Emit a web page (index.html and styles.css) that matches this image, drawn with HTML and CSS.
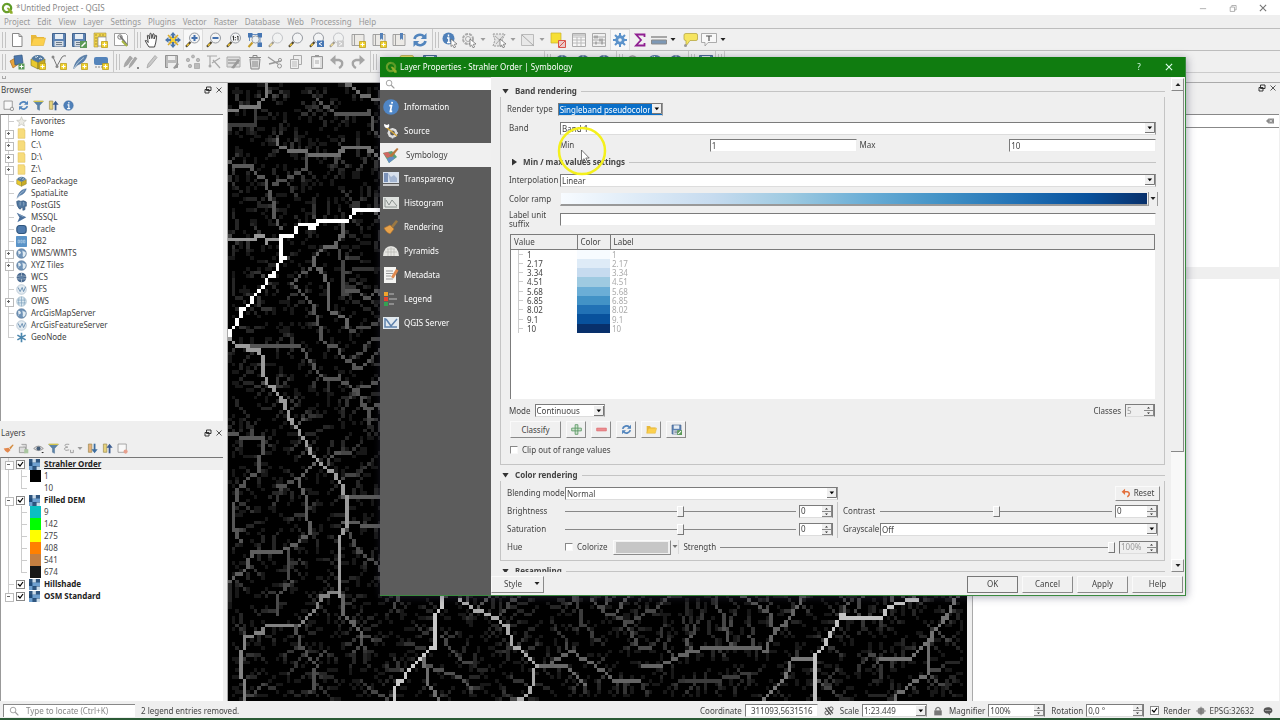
FILE: index.html
```html
<!DOCTYPE html>
<html lang="en">
<head>
<meta charset="utf-8">
<title>*Untitled Project - QGIS</title>
<link rel="stylesheet" href="styles.css">
</head>
<body>
<svg class="defs" aria-hidden="true">
  <symbol id="qgis" viewBox="0 0 16 16"><path d="M8 2.4a5.6 5.6 0 1 0 3.6 9.9" fill="none" stroke="#6a9f2c" stroke-width="3"/><path d="M8 2.4a5.6 5.6 0 0 1 4.6 8.6" fill="none" stroke="#5a9a26" stroke-width="3"/><path d="M7.5 7.5h3l5 5.5v2.500h-3z" fill="#8fae2c"/></symbol>
  <symbol id="page" viewBox="0 0 16 16"><path d="M3.500 1.500h6.500l3 3v10h-9.500z" fill="#fff" stroke="#888"/><path d="M10 1.500v3h3" fill="none" stroke="#888"/></symbol>
  <symbol id="folder" viewBox="0 0 16 16"><path d="M1 13V3h5l1 2h7v2" fill="#e8b93c"/><path d="M1 13.500 3.500 6h12L13.500 13.500z" fill="#fcd04e" stroke="#e0b030" stroke-width=".6"/></symbol>
  <symbol id="save" viewBox="0 0 16 16"><path d="M1.500 1.500h13v13h-13z" fill="#5d83b4" stroke="#44658f"/><path d="M4 2h8v5H4z" fill="#e6edf4"/><path d="M3.500 9h9v5.500h-9z" fill="#d7dde4"/><path d="M5 10.500h6M5 12.500h6" stroke="#6d7b8c"/></symbol>
  <symbol id="saveas" viewBox="0 0 16 16"><use href="#save"/><path d="M9 9h7v7H9z" fill="#5b9a58"/><path d="m10.500 14.500 4-4" stroke="#fff" stroke-width="1.500"/></symbol>
  <symbol id="plus" viewBox="0 0 16 16"><path d="M9.500 9.500h6v6h-6z" fill="#efd12c" stroke="#b79710" stroke-width=".7"/><path d="M12.500 10.500v4M10.500 12.500h4" stroke="#fff"/></symbol>
  <symbol id="layout" viewBox="0 0 16 16"><path d="M2 1h12v4H6v10H2z" fill="#f1d54b" stroke="#a8903b" stroke-width=".6"/><path d="M6 5h8v9H6z" fill="#fff" stroke="#888" stroke-width=".7"/><path d="M3 3h2M3 6h2M3 9h2M3 12h2M8 2v2M11 2v2" stroke="#8c762b" stroke-width=".7"/><use href="#plus"/></symbol>
  <symbol id="stylemgr" viewBox="0 0 16 16"><path d="M1.500 1.500h11l2 2v10h-13z" fill="#fff" stroke="#888" stroke-width=".8"/><path d="M7 4 14 13" stroke="#777" stroke-width="2"/><circle cx="7" cy="5" r="2.200" fill="none" stroke="#777"/><path d="m9 9 5 5" stroke="#a9b743" stroke-width="2"/></symbol>
  <symbol id="hand" viewBox="0 0 16 16"><path d="M5 15c-1-2-3-4-3.800-6.300 1-.7 2 .3 3 1.800L3.300 3.500c1-.9 1.600 0 2.300 3.500L6 1.500c1-.8 1.600 0 1.800 5l1.200-4.700c1.300-.4 1.400.4 1 5.200l1.600-3.600c1.200-.2 1.200.6.700 3.600-.3 3-.8 5-1.800 8z" fill="#fff" stroke="#333" stroke-width=".9"/></symbol>
  <symbol id="pan" viewBox="0 0 16 16"><path d="M5 5h6v6H5z" fill="#f2cf3c" stroke="#9b8a33" stroke-width=".6"/><path d="m8 0 3 3.500H9V6H7V3.500H5zM8 16l-3-3.500h2V10h2v2.500h2zM0 8l3.500-3v2H6v2H3.500v2zM16 8l-3.500-3v2H10v2h2.500v2z" fill="#4a75ab"/><path d="m3 3 3 3M13 3l-3 3M3 13l3-3M13 13l-3-3" stroke="#d9ab24" stroke-width="1.500"/></symbol>
  <symbol id="glass" viewBox="0 0 16 16"><path d="m5.500 10-4.500 4.800" stroke="#4c4330" stroke-width="2.200"/><path d="m4 11.700-2 2" stroke="#efc531" stroke-width="1.600"/><circle cx="9.500" cy="6" r="5" fill="#f3f4f5" stroke="#8b9096" stroke-width=".9"/></symbol>
  <symbol id="zoomin" viewBox="0 0 16 16"><use href="#glass"/><path d="M9.500 3v6M6.500 6h6" stroke="#4270ae" stroke-width="2"/></symbol>
  <symbol id="zoomout" viewBox="0 0 16 16"><use href="#glass"/><path d="M6.500 6h6" stroke="#4270ae" stroke-width="2"/></symbol>
  <symbol id="zoom11" viewBox="0 0 16 16"><use href="#glass"/><path d="M6.500 4.800 7.500 4v4.500M11 4.800l1-.8v4.500M9.300 5v1M9.300 7.300v1" fill="none" stroke="#333"/></symbol>
  <symbol id="zoomfull" viewBox="0 0 16 16"><path d="M1 1h4.500v4.500H1zM10.500 1H15v4.500h-4.500zM10.500 10.500H15V15h-4.500z" fill="#4676b3"/><path d="M5 2.500h6M13 5v6M2.500 5v4" stroke="#4676b3" stroke-width=".8"/><circle cx="8.500" cy="7.500" r="3.600" fill="#eef1f3" stroke="#8b9096" stroke-width=".8"/><path d="m5.500 10.500-4 4.500" stroke="#c39a25" stroke-width="2"/></symbol>
  <symbol id="zoomlast" viewBox="0 0 16 16"><use href="#glass"/><path d="M8 8.500h7V15H8z" fill="#4676b3"/><path d="m13 10-3 1.800 3 1.800" fill="none" stroke="#fff"/></symbol>
  <symbol id="zoomnext" viewBox="0 0 16 16"><use href="#glass"/><path d="M8 8.500h7V15H8z" fill="#aaa"/><path d="m10 10 3 1.800-3 1.800" fill="none" stroke="#fff"/></symbol>
  <symbol id="book" viewBox="0 0 16 16"><path d="M2 2.500h12v11H2z" fill="#eceae6" stroke="#8f8f8f" stroke-width=".8"/><path d="M4.500 2.500v11" stroke="#8f8f8f" stroke-width=".8"/></symbol>
  <symbol id="mapview" viewBox="0 0 16 16"><use href="#book"/><use href="#plus"/></symbol>
  <symbol id="bookmark" viewBox="0 0 16 16"><use href="#book"/><path d="M9 1h3v7l-1.500-1.500L9 8z" fill="#5682b8"/><use href="#plus"/></symbol>
  <symbol id="bookshow" viewBox="0 0 16 16"><use href="#book"/><path d="M9 1h3v7l-1.500-1.500L9 8z" fill="#5682b8"/></symbol>
  <symbol id="refresh" viewBox="0 0 16 16"><path d="M2.500 7a5.500 5 0 0 1 9.500-2.500" fill="none" stroke="#5285bd" stroke-width="2.600"/><path d="M14.500 1v6H8.700z" fill="#5285bd"/><path d="M13.500 9a5.500 5 0 0 1-9.500 2.500" fill="none" stroke="#5285bd" stroke-width="2.600"/><path d="M1.500 15V9h5.800z" fill="#5285bd"/></symbol>
  <symbol id="pointer" viewBox="0 0 16 16"><path d="m9 7 6 5-2.800.3L13.600 15l-1.600.8-1.300-2.800L9 14.500z" fill="#fff" stroke="#666" stroke-width=".7"/></symbol>
  <symbol id="info" viewBox="0 0 16 16"><circle cx="8" cy="8" r="7" fill="#4f80b9" stroke="#416b9c" stroke-width=".6"/><path d="M8.500 3v2M6.500 7h2v5.500M6 12.500h4.500" fill="none" stroke="#fff" stroke-width="1.700"/></symbol>
  <symbol id="infobig" viewBox="0 0 16 16"><circle cx="8" cy="8" r="7.800" fill="#4f86c6"/><path d="M9.200 2.800 8.900 4.600M6.300 6.700h2.200L7.400 12.300h1.800" fill="none" stroke="#fff" stroke-width="1.700"/></symbol>
  <symbol id="identify" viewBox="0 0 16 16"><circle cx="6.500" cy="6.500" r="6" fill="#4f80b9"/><path d="M6.500 2.500v2M5 6h1.800v4M5 10.500h3.500" fill="none" stroke="#fff" stroke-width="1.400"/><use href="#pointer"/></symbol>
  <symbol id="gear" viewBox="0 0 16 16"><path d="M8 1v14M1 8h14M3 3l10 10M13 3 3 13" stroke="currentColor" stroke-width="2"/><circle cx="8" cy="8" r="4.700" fill="currentColor"/><circle cx="8" cy="8" r="1.800" fill="#eef2f6"/></symbol>
  <symbol id="action" viewBox="0 0 16 16"><circle cx="7" cy="7" r="5" fill="none" stroke="#aaa" stroke-width="2" stroke-dasharray="3 1"/><circle cx="7" cy="7" r="2.500" fill="none" stroke="#aaa"/><use href="#pointer"/></symbol>
  <symbol id="snowflake" viewBox="0 0 16 16"><path d="M8 1v14M2 4.500l12 7M14 4.500l-12 7" stroke="#4c87ae" stroke-width="2.400"/></symbol>
  <symbol id="select" viewBox="0 0 16 16"><path d="M2 2h12l-3 6 2 6H2l2-6z" fill="#e4e4e4" stroke="#999" stroke-dasharray="2 1"/><path d="m4 4 8 7M12 4 5 12" stroke="#aaa"/><use href="#pointer"/></symbol>
  <symbol id="deselect" viewBox="0 0 16 16"><path d="M1.500 2.500h12v11h-12z" fill="#e8e8e8" stroke="#bbb"/><path d="m2 3 12 11" stroke="#aaa"/></symbol>
  <symbol id="unselect" viewBox="0 0 16 16"><path d="M1 1h10v10H1z" fill="#f6df35" stroke="#c8b12c" stroke-width=".7"/><path d="M8.500 8.500h7v7h-7z" fill="#eacaca" stroke="#d9534a"/><path d="m9 15 6-6" stroke="#d9534a"/></symbol>
  <symbol id="table" viewBox="0 0 16 16"><path d="M1.500 1.500h13v13h-13z" fill="#f7f7f7" stroke="#aaa"/><path d="M2 5h12M2 8h12M2 11h12M6 5v9M10 5v9" stroke="#bbb"/><path d="M2 2h12v2H2z" fill="#ccc"/></symbol>
  <symbol id="abacus" viewBox="0 0 16 16"><path d="M1.500 1.500h13v13h-13zM2 5h12M2 8h12M2 11h12" fill="none" stroke="#aaa"/><path d="M4 3.500v3M6 3.500v3M11 6.500v3M9 6.500v3M5 9.500v3M11 9.500v3" stroke="#999" stroke-width="1.400"/></symbol>
  <symbol id="sigma" viewBox="0 0 16 16"><path d="M12.500 5V2.500H4L9 8l-5 5.500h8.500V11" fill="none" stroke="#8f1f91" stroke-width="1.800"/></symbol>
  <symbol id="ruler" viewBox="0 0 16 16"><path d="M0 4h16v2H0z" fill="#a6a6a6"/><path d="M.5 8h15v4H.5z" fill="#7d98b5" stroke="#8b8b8b"/></symbol>
  <symbol id="tip" viewBox="0 0 16 16"><path d="M4 1.500h10q1.500 0 1.500 1.500v4q0 1.500-1.500 1.500H8L4 14V8.500Q2 8.500 2 7V3q0-1.500 2-1.500z" fill="#f6e561" stroke="#b7a845" stroke-width=".8"/><circle cx="3.500" cy="13.500" r="1.500" fill="#999"/></symbol>
  <symbol id="textann" viewBox="0 0 16 16"><path d="M.5 1.500h15v9H7L4 14v-3.500H.5z" fill="#f8f8f8" stroke="#999" stroke-width=".8"/><path d="M5 4h6M8 4v5" stroke="#555" stroke-width="1.200"/></symbol>
  <symbol id="datasrc" viewBox="0 0 16 16"><path d="m1 7 7-4 3 6-7 5z" fill="#e6a33a" stroke="#a96c24" stroke-width=".7"/><path d="m5 2 8-1 1 8-8 2z" fill="#4c77ad" stroke="#34577f" stroke-width=".7"/><path d="M9.500 9.500h6v6h-6z" fill="#5b9a58"/><path d="M12.500 10.500v4M10.500 12.500h4" stroke="#fff"/></symbol>
  <symbol id="gpkg" viewBox="0 0 16 16"><path d="M1 5 8 8.500V15l-7-3.500z" fill="#e9c92f" stroke="#777022" stroke-width=".6"/><path d="M8 8.500 15 5v6.500L8 15z" fill="#c7ab25" stroke="#777022" stroke-width=".6"/><path d="M1.500 5Q3 1 8 1t6.500 4L8 8.500z" fill="#53799f"/><path d="M5 3q2 1 3-1M9 5q2-2 3 0" stroke="#e3edf5" fill="none"/></symbol>
  <symbol id="newgpkg" viewBox="0 0 16 16"><use href="#gpkg"/><use href="#plus"/></symbol>
  <symbol id="vector" viewBox="0 0 16 16"><path d="M2 3 6 12 11 3q2-2 4-1" fill="none" stroke="#777"/><circle cx="2" cy="3" r="1.500" fill="#888"/><circle cx="6" cy="12.500" r="1.500" fill="#888"/><use href="#plus"/></symbol>
  <symbol id="feather" viewBox="0 0 16 16"><path d="M1.500 15C3 8 7 2 15 1c-1 5-4 8-9.500 10z" fill="#5c83ad" stroke="#3d618c" stroke-width=".5"/><path d="M1.500 15Q5 8 12 3.500" stroke="#dbe6ee" stroke-width=".7" fill="none"/></symbol>
  <symbol id="newfeather" viewBox="0 0 16 16"><use href="#feather"/><use href="#plus"/></symbol>
  <symbol id="virtual" viewBox="0 0 16 16"><rect x="1" y="3" width="14" height="8" rx="2" fill="#5484bb"/><path d="M2 13h8" stroke="#888" stroke-dasharray="2 1"/><use href="#plus"/></symbol>
  <symbol id="pencils" viewBox="0 0 16 16"><path d="m1 13 1-4 5-7 2.500 2-5 7zM6 14l1-4 5-7 2 1.500-5 7z" fill="#a8a8a8" stroke="#999" stroke-width=".6"/><path d="M14 13h2v2h-2z" fill="#888"/></symbol>
  <symbol id="pencil" viewBox="0 0 16 16"><path d="m3 14 1-4 7-8.500 2 2L6 12z" fill="#c9c9c9" stroke="#a3a3a3" stroke-width=".8"/></symbol>
  <symbol id="savegray" viewBox="0 0 16 16"><path d="M1.500 1.500h12v12h-12z" fill="#bbb" stroke="#929292"/><path d="M4 2h7v4H4zM4 9h8v5H4z" fill="#eee"/><path d="m9 14 4-5 2 1-4 5z" fill="#999"/></symbol>
  <symbol id="points" viewBox="0 0 16 16"><g fill="#bbb" stroke="#999" stroke-width=".6"><circle cx="3" cy="6" r="1.700"/><circle cx="8" cy="2.500" r="1.500"/><circle cx="13" cy="6" r="1.700"/><circle cx="5" cy="12" r="1.700"/><path d="M9.500 9.500h5v5h-5z"/></g></symbol>
  <symbol id="vertex" viewBox="0 0 16 16"><path d="M1 2h10M4 2v10M6 9l8-5M7 6l7 8" fill="none" stroke="#aaa" stroke-width="1.200"/><circle cx="4" cy="12" r="1.500" fill="#aaa"/></symbol>
  <symbol id="multiedit" viewBox="0 0 16 16"><path d="M1 3h13v10H1z" fill="#ddd" stroke="#aaa"/><path d="M2 6h11M2 9h11" stroke="#888"/><path d="m5 14 7-9 2 1.500-6 8z" fill="#999"/></symbol>
  <symbol id="trash" viewBox="0 0 16 16"><path d="M3 5h10l-1 10H4z" fill="#ddd" stroke="#888"/><path d="M2 3.500h12M6 3V1.500h4V3M6 7v6M8 7v6M10 7v6" stroke="#888" fill="none"/></symbol>
  <symbol id="cut" viewBox="0 0 16 16"><path d="m1 3 10 7M2 10l12-3" stroke="#999" stroke-width="1.300"/><circle cx="12.500" cy="12" r="2" fill="none" stroke="#999"/><circle cx="13" cy="6" r="1.600" fill="none" stroke="#999"/></symbol>
  <symbol id="copy" viewBox="0 0 16 16"><path d="M5.500 1.500h8v9h-8z" fill="#eee" stroke="#aaa"/><path d="M2.500 5.500h8v9h-8z" fill="#eee" stroke="#aaa"/><path d="M4 8h5M4 10h5M4 12h5" stroke="#bbb"/></symbol>
  <symbol id="paste" viewBox="0 0 16 16"><path d="M2.500 2.500h11v12h-11z" fill="#ddd" stroke="#999"/><path d="M5 4h6v9H5z" fill="#f5f5f5"/><path d="M6 1h4v2H6z" fill="#999"/><path d="M6 7h4M6 9h4" stroke="#aaa"/></symbol>
  <symbol id="undo" viewBox="0 0 16 16"><path d="M5 6h5q4 1 3 5-1 2-3 3" fill="none" stroke="currentColor" stroke-width="2.400"/><path d="M6.500 1v10L1 6z" fill="currentColor"/></symbol>
  <symbol id="redo" viewBox="0 0 16 16"><path d="M11 6H6Q2 7 3 11q1 2 3 3" fill="none" stroke="currentColor" stroke-width="2.400"/><path d="M9.500 1v10L15 6z" fill="currentColor"/></symbol>
  <symbol id="globe" viewBox="0 0 16 16"><circle cx="8" cy="8" r="7" fill="#6f93b8" stroke="#4f6f91" stroke-width=".8"/><path d="M3 4q3 0 4 2t-2 3-1 3M9 2q0 3 3 3t2 4-3 4-1-4" fill="#e1ebf2"/></symbol>
  <symbol id="globelight" viewBox="0 0 16 16"><circle cx="8" cy="8" r="7" fill="#dce8f0" stroke="#8eaabd" stroke-width=".8"/><path d="M2 6h12M2 10h12M8 1v14M4.500 2.500q-2 5.500 0 11M11.500 2.500q2 5.500 0 11" fill="none" stroke="#7fa2be"/></symbol>
  <symbol id="globedark" viewBox="0 0 16 16"><circle cx="8" cy="8" r="7" fill="#49698f"/><path d="M1.500 6h13M1.500 10h13M8 1v14" stroke="#c2d1df" fill="none"/><path d="M5 6h6v4H5z" fill="#5e80a6"/></symbol>
  <symbol id="globev" viewBox="0 0 16 16"><circle cx="8" cy="8" r="7" fill="#e3ebf1" stroke="#9aafc0" stroke-width=".8"/><path d="m3 5 3 6 3-6 2 6 3-7" fill="none" stroke="#648aae" stroke-width="1.300"/></symbol>
  <symbol id="star" viewBox="0 0 16 16"><path d="m8 1 2 5 5 .4-4 3.300 1.300 5L8 12l-4.300 2.700L5 9.700 1 6.400 6 6z" fill="#ecebe4" stroke="#b5b5ad" stroke-width=".8"/></symbol>
  <symbol id="yfolder" viewBox="0 0 16 16"><path d="M3 1h9v2h1v12H3z" fill="#f7dc7b" stroke="#dfbf5c" stroke-width=".8"/></symbol>
  <symbol id="elephant" viewBox="0 0 16 16"><path d="M1 2q3-2 6 0 4-2 8 1v6h-2v5l-3 1v-4H7v2H5Q1 9 1 2z" fill="#51779f" stroke="#36587e"/><path d="M6 3v5M11 3q1 3 0 5" stroke="#a9bfd3" fill="none"/></symbol>
  <symbol id="mssql" viewBox="0 0 16 16"><path d="M1 1 15 7.500 2 15 5 8z" fill="#496f9c"/><path d="M4 3.500 11 7" stroke="#a3bbd1"/></symbol>
  <symbol id="oracle" viewBox="0 0 16 16"><rect x="1.200" y="2.200" width="13.600" height="11.600" rx="4" fill="#4f7bae" stroke="#31577f" stroke-width="1.600"/></symbol>
  <symbol id="db2" viewBox="0 0 16 16"><rect x="0" y="0" width="16" height="16" rx="1" fill="#5b94c8"/><path d="M3 6h2v4H3zM7 6h2v4H7zM11 6h2v4h-2z" fill="none" stroke="#cfe2f1" stroke-width=".8"/></symbol>
  <symbol id="raster" viewBox="0 0 16 16"><path d="M0 0h16v16H0z" fill="#1f4a78"/><path d="M0 0h5v5H0zM10 0h6v5h-6zM5 11h6v5H5z" fill="#30567f"/><path d="M5 5h5v5H5zM10 5h6v5h-6zM0 10h5v6H0z" fill="#6fa0cf"/><path d="M5 0h5v5H5zM11 11h5v5h-5z" fill="#cbdcea"/></symbol>
  <symbol id="filter" viewBox="0 0 16 16"><path d="M1 2h14l-5.500 6v7l-3-1.500V8z" fill="#5a83a9" stroke="#3f6488" stroke-width=".6"/><path d="M1 1h14v2H1z" fill="#d3c44b"/></symbol>
  <symbol id="addlayer" viewBox="0 0 16 16"><path d="M1.500 1.500h12v12h-12z" fill="#f8f8f8" stroke="#777"/><circle cx="13" cy="13" r="2.500" fill="#eee" stroke="#777"/></symbol>
  <symbol id="collapse" viewBox="0 0 16 16"><path d="M2 1.500h5v12H2z" fill="#e6d27c" stroke="#9a8b51"/><path d="M11 15V4" stroke="#3c5d91" stroke-width="2.600"/><path d="m6.500 7 4.500-6 4.500 6z" fill="#3c5d91"/></symbol>
  <symbol id="expand" viewBox="0 0 16 16"><path d="M2 1.500h5v12H2z" fill="#e6b27c" stroke="#9a8b51"/><path d="M11 1v11" stroke="#3c6d9f" stroke-width="2.600"/><path d="m6.500 9 4.500 6 4.500-6z" fill="#3c6d9f"/></symbol>
  <symbol id="brush" viewBox="0 0 16 16"><path d="m8 7 5-6 2 1.500-5 6.500z" fill="#9b7843"/><path d="m1 9 6-3 4 4-4 5q-1-1-2-1-2-1-4-5z" fill="#e7a24b" stroke="#a96f2b" stroke-width=".6"/></symbol>
  <symbol id="brushred" viewBox="0 0 16 16"><path d="m9 7 5-5 1.500 1L11 9z" fill="#d48c3f"/><path d="m1 8 7-1 3 3-4 4Q3 13 1 8z" fill="#e2884e"/></symbol>
  <symbol id="addgroup" viewBox="0 0 16 16"><path d="M2 6h9v8H2zM5 2h7v9" fill="#ddd" stroke="#888"/><path d="M9 9h6v6H9z" fill="#a9c6a0"/></symbol>
  <symbol id="eye" viewBox="0 0 16 16"><path d="M1 8q7-7 14 0-7 6-14 0z" fill="#ddd" stroke="#777"/><circle cx="8" cy="8" r="3" fill="#445d78"/><path d="m12 13 4 0-2 2z" fill="#222"/></symbol>
  <symbol id="epsilon" viewBox="0 0 16 16"><path d="M9 2Q2 1 3 4q1 2 4 2-5 0-5 3 1 3 7 1M11 10v4h4v-4" fill="none" stroke="#999" stroke-width="1.300"/></symbol>
  <symbol id="removelayer" viewBox="0 0 16 16"><path d="M1.500 1.500h12v12h-12z" fill="#f8f8f8" stroke="#888"/><circle cx="12.500" cy="12.500" r="3" fill="#e6a08e"/></symbol>
  <symbol id="search" viewBox="0 0 16 16"><circle cx="6.500" cy="6.500" r="4.500" fill="none" stroke="#999" stroke-width="1.400"/><path d="m10 10 5 5" stroke="#999" stroke-width="1.800"/></symbol>
  <symbol id="float" viewBox="0 0 16 16"><path d="M5 2h9v7H5zM2 7h8v7H2z" fill="#f0f0f0" stroke="#222" stroke-width="1.800"/></symbol>
  <symbol id="x" viewBox="0 0 16 16"><path d="m3 3 10 10M13 3 3 13" stroke="currentColor" stroke-width="1.800"/></symbol>
  <symbol id="tools" viewBox="0 0 16 16"><circle cx="9.500" cy="10" r="3.600" fill="none" stroke="#ddd" stroke-width="2.400"/><path d="M9.500 5v2M9.500 13v2.500M4.500 10h2M12.500 10h2.500M6 6.500l1.500 1.500M13 6.500 11.500 8M6 13.500 7.500 12M13 13.500 11.500 12" stroke="#ddd" stroke-width="1.600"/><path d="m3 4 11 9" stroke="#d3a63c" stroke-width="1.600"/><path d="M1 1q0 4 3 4t2-4l-2 1z" fill="#fff"/></symbol>
  <symbol id="symb" viewBox="0 0 16 16"><path d="m0 6 9-2 5 6-8 6z" fill="#58a078"/><path d="m0 6 5-1 4 4-5 2z" fill="#cf6862"/><path d="m4 12 5-3 3 2-6 5z" fill="#648cc5"/><path d="m6 9 8-8 1.500 1L9 10z" fill="#b8763c"/></symbol>
  <symbol id="transp" viewBox="0 0 16 16"><path d="M0 1h16v11H0z" fill="#d8e1ed"/><path d="M1 2h4v9H1z" fill="#7b92b8"/><path d="m5 2 3 4 3-2 3 3v4H7z" fill="#a4b6d2"/><path d="M0 14h16" stroke="#eee" stroke-width="1.500"/></symbol>
  <symbol id="hist" viewBox="0 0 16 16"><path d="M0 2h16v12H0z" fill="#dfe2df"/><path d="M2 3v9h12M3 5l3 5 3-5 5 6" stroke="#8a918e" fill="none"/></symbol>
  <symbol id="pyr" viewBox="0 0 16 16"><path d="M0 13Q1 3 8 3t8 10z" fill="#e7e7e3"/><path d="M2 9h12M4 6h8M5 6v7M8 3v10M11 6v7" stroke="#b7b7b2" stroke-width=".7"/></symbol>
  <symbol id="meta" viewBox="0 0 16 16"><path d="M1 0h12v16H1z" fill="#f5f5f3"/><path d="M3 4h7M3 6.500h7M3 9h5M3 12h7" stroke="#999"/><path d="m8 10 5-8 2.500 1.500-5 8z" fill="#e08a4f"/></symbol>
  <symbol id="leg" viewBox="0 0 16 16"><path d="M1 1h4v4H1z" fill="#f0a42c"/><path d="M1 6h4v4H1z" fill="#e7442f"/><path d="M1 11h4v4H1z" fill="#35a153"/><path d="M6 3h5M6 8h8M6 13h5" stroke="#9d9d9d" stroke-width="1.500"/></symbol>
  <symbol id="server" viewBox="0 0 16 16"><path d="M0 2h16v12H0z" fill="#e2e9ef"/><path d="M2 3v9h12M3 4l5 7 6-7" fill="none" stroke="#5f83ad" stroke-width="1.500"/></symbol>
  <symbol id="addclass" viewBox="0 0 16 16"><path d="M6 1h4v14H6zM1 6h14v4H1z" fill="#cfe3cf" stroke="#569560" stroke-width="1.200"/></symbol>
  <symbol id="delclass" viewBox="0 0 16 16"><path d="M1 6h14v4H1z" fill="#eb8d90" stroke="#dd6569"/></symbol>
  <symbol id="lock" viewBox="0 0 16 16"><path d="M2 7h12v8H2z" fill="#777"/><path d="M4.500 7V4.500q3.500-5 7 0V7" fill="none" stroke="#777" stroke-width="2"/></symbol>
  <symbol id="bubble" viewBox="0 0 16 16"><path d="M8 2c4 0 7 2 7 5s-2 4-4 5v3l-3-3C4 12 1 10 1 7s3-5 7-5z" fill="#555"/><path d="M4 7h1.500M7.200 7h1.500M10.500 7H12" stroke="#fff" stroke-width="1.500"/></symbol>
  <symbol id="extent" viewBox="0 0 16 16"><path d="m2 3 9 11M6 2l8 10" stroke="#555" stroke-width="2"/><circle cx="4.500" cy="11" r="3" fill="none" stroke="#555" stroke-width="1.500"/><circle cx="11.500" cy="4.500" r="3" fill="none" stroke="#555" stroke-width="1.500"/></symbol>
  <symbol id="crs" viewBox="0 0 16 16"><circle cx="8" cy="8" r="5.500" fill="#999"/><path d="M0 8h16M8 1v14M3 5h10M3 11h10" stroke="#666"/></symbol>
  <symbol id="clear" viewBox="0 0 16 16"><path d="M5 3h11v10H5L0 8z" fill="#8b8b8b"/><path d="m7 5.500 5 5M12 5.500l-5 5" stroke="#fff" stroke-width="1.400"/></symbol>
</svg>

<header class="titlebar">
  <svg class="i12"><use href="#qgis"/></svg>
  <span class="apptitle">*Untitled Project - QGIS</span>
  <span class="wincontrols">
    <button aria-label="Minimize"><svg class="i10" viewBox="0 0 16 16"><path d="M3 9h10" stroke="#888"/></svg></button>
    <button aria-label="Restore"><svg class="i10" viewBox="0 0 16 16"><path d="M3.500 6.500h7v7h-7zM6 6V4h7v7h-2.500" fill="none" stroke="#888"/></svg></button>
    <button aria-label="Close"><svg class="i10"><use href="#x"/></svg></button>
  </span>
</header>
<nav class="menubar">
  <button>Project</button><button>Edit</button><button>View</button><button>Layer</button><button>Settings</button><button>Plugins</button><button>Vector</button><button>Raster</button><button>Database</button><button>Web</button><button>Processing</button><button>Help</button>
</nav>

<div class="toolbar">
  <div class="tools t-file">
    <button aria-label="New"><svg><use href="#page"/></svg></button><button aria-label="Open"><svg><use href="#folder"/></svg></button><button aria-label="Save"><svg><use href="#save"/></svg></button><button aria-label="Save as"><svg><use href="#saveas"/></svg></button><button aria-label="New layout"><svg><use href="#layout"/></svg></button><button aria-label="Style manager"><svg><use href="#stylemgr"/></svg></button>
  </div>
  <div class="tools t-nav">
    <button aria-label="Pan"><svg><use href="#hand"/></svg></button><button aria-label="Pan to selection"><svg><use href="#pan"/></svg></button><button class="pressed" aria-label="Zoom in"><svg><use href="#zoomin"/></svg></button><button aria-label="Zoom out"><svg><use href="#zoomout"/></svg></button><button aria-label="Native zoom"><svg><use href="#zoom11"/></svg></button><button aria-label="Zoom full"><svg><use href="#zoomfull"/></svg></button><button class="off" aria-label="Zoom to selection"><svg><use href="#glass"/></svg></button><button aria-label="Zoom to layer"><svg><use href="#glass"/></svg></button><button aria-label="Zoom last"><svg><use href="#zoomlast"/></svg></button><button class="off" aria-label="Zoom next"><svg><use href="#zoomnext"/></svg></button><button aria-label="New map view"><svg><use href="#mapview"/></svg></button><button aria-label="New bookmark"><svg><use href="#bookmark"/></svg></button><button aria-label="Show bookmarks"><svg><use href="#bookshow"/></svg></button><button aria-label="Refresh"><svg><use href="#refresh"/></svg></button>
  </div>
  <div class="tools t-attr">
    <button aria-label="Identify"><svg><use href="#identify"/></svg></button><button class="drop gray" aria-label="Run action"><svg><use href="#action"/></svg></button><button class="drop gray" aria-label="Select features"><svg><use href="#select"/></svg></button><button class="drop gray" aria-label="Select by value"><svg><use href="#deselect"/></svg></button><button aria-label="Deselect all"><svg><use href="#unselect"/></svg></button><button aria-label="Attribute table"><svg><use href="#table"/></svg></button><button aria-label="Field calculator"><svg><use href="#abacus"/></svg></button><button class="pressed blue" aria-label="Toolbox"><svg><use href="#gear"/></svg></button><button aria-label="Statistics"><svg><use href="#sigma"/></svg></button><button class="drop" aria-label="Measure"><svg><use href="#ruler"/></svg></button><button aria-label="Map tips"><svg><use href="#tip"/></svg></button><button class="drop" aria-label="Text annotation"><svg><use href="#textann"/></svg></button>
  </div>
</div>
<div class="toolbar">
  <div class="tools t-src">
    <button aria-label="Data sources"><svg><use href="#datasrc"/></svg></button><button aria-label="New GeoPackage"><svg><use href="#newgpkg"/></svg></button><button aria-label="New shapefile"><svg><use href="#vector"/></svg></button><button aria-label="New SpatiaLite"><svg><use href="#newfeather"/></svg></button><button aria-label="New virtual layer"><svg><use href="#virtual"/></svg></button>
  </div>
  <div class="tools t-edit gray">
    <button aria-label="Current edits"><svg><use href="#pencils"/></svg></button><button aria-label="Toggle editing"><svg><use href="#pencil"/></svg></button><button aria-label="Save edits"><svg><use href="#savegray"/></svg></button><button aria-label="Add feature"><svg><use href="#points"/></svg></button><button aria-label="Vertex tool"><svg><use href="#vertex"/></svg></button><button aria-label="Modify attributes"><svg><use href="#multiedit"/></svg></button><button aria-label="Delete"><svg><use href="#trash"/></svg></button><button aria-label="Cut"><svg><use href="#cut"/></svg></button><button aria-label="Copy"><svg><use href="#copy"/></svg></button><button aria-label="Paste"><svg><use href="#paste"/></svg></button><button aria-label="Undo"><svg><use href="#undo"/></svg></button><button aria-label="Redo"><svg><use href="#redo"/></svg></button>
  </div>
  <div class="tools t-label"><button aria-label="Label"><svg><use href="#tip"/></svg></button><button aria-label="Diagram"><svg><use href="#save"/></svg></button></div>
  <div class="tools t-web"><button aria-label="Web"><svg><use href="#globedark"/></svg></button><button aria-label="Web search"><svg><use href="#globedark"/></svg></button><button aria-label="Web layers"><svg><use href="#globedark"/></svg></button></div>
  <div class="tools t-web"><button aria-label="Search"><svg><use href="#search"/></svg></button><button aria-label="Script"><svg><use href="#gpkg"/></svg></button><button aria-label="Globe"><svg><use href="#globedark"/></svg></button></div>
  <div class="tools"><button aria-label="Console"><svg><use href="#save"/></svg></button></div>
  <div class="tools"></div>
</div>
<div class="strip"><i class="grip"></i></div>

<main class="workspace">
  <aside class="docks">
    <section class="dock browser">
      <header class="dockhead"><h2>Browser</h2><button aria-label="Float"><svg class="i8"><use href="#float"/></svg></button><button aria-label="Close"><svg class="i8"><use href="#x"/></svg></button></header>
      <div class="docktools"><button aria-label="Add"><svg><use href="#addlayer"/></svg></button><button aria-label="Refresh"><svg><use href="#refresh"/></svg></button><button aria-label="Filter"><svg><use href="#filter"/></svg></button><button aria-label="Collapse"><svg><use href="#collapse"/></svg></button><button aria-label="Properties"><svg><use href="#info"/></svg></button></div>
      <ul class="tree">
        <li><i class="br"></i><svg><use href="#star"/></svg>Favorites</li>
        <li><i class="br ex"></i><svg><use href="#yfolder"/></svg>Home</li>
        <li><i class="br ex"></i><svg><use href="#yfolder"/></svg>C:\</li>
        <li><i class="br ex"></i><svg><use href="#yfolder"/></svg>D:\</li>
        <li><i class="br ex"></i><svg><use href="#yfolder"/></svg>Z:\</li>
        <li><i class="br"></i><svg><use href="#gpkg"/></svg>GeoPackage</li>
        <li><i class="br"></i><svg><use href="#feather"/></svg>SpatiaLite</li>
        <li><i class="br"></i><svg><use href="#elephant"/></svg>PostGIS</li>
        <li><i class="br"></i><svg><use href="#mssql"/></svg>MSSQL</li>
        <li><i class="br"></i><svg><use href="#oracle"/></svg>Oracle</li>
        <li><i class="br"></i><svg><use href="#db2"/></svg>DB2</li>
        <li><i class="br ex"></i><svg><use href="#globe"/></svg>WMS/WMTS</li>
        <li><i class="br ex"></i><svg><use href="#globe"/></svg>XYZ Tiles</li>
        <li><i class="br"></i><svg><use href="#globedark"/></svg>WCS</li>
        <li><i class="br"></i><svg><use href="#globev"/></svg>WFS</li>
        <li><i class="br ex"></i><svg><use href="#globelight"/></svg>OWS</li>
        <li><i class="br"></i><svg><use href="#globe"/></svg>ArcGisMapServer</li>
        <li><i class="br"></i><svg><use href="#globev"/></svg>ArcGisFeatureServer</li>
        <li><i class="br last"></i><svg><use href="#snowflake"/></svg>GeoNode</li>
      </ul>
    </section>
    <section class="dock layers">
      <header class="dockhead"><h2>Layers</h2><button aria-label="Float"><svg class="i8"><use href="#float"/></svg></button><button aria-label="Close"><svg class="i8"><use href="#x"/></svg></button></header>
      <div class="docktools"><button aria-label="Styling"><svg><use href="#brushred"/></svg></button><button aria-label="Add group"><svg><use href="#addgroup"/></svg></button><button aria-label="Visibility"><svg><use href="#eye"/></svg></button><button aria-label="Filter"><svg><use href="#filter"/></svg></button><button class="drop gray" aria-label="Expression filter"><svg><use href="#epsilon"/></svg></button><button aria-label="Expand all"><svg><use href="#expand"/></svg></button><button aria-label="Collapse all"><svg><use href="#collapse"/></svg></button><button aria-label="Remove"><svg><use href="#removelayer"/></svg></button></div>
      <ul class="tree layertree">
        <li class="current"><i class="br ex open"></i><input type="checkbox" id="l1" checked><svg><use href="#raster"/></svg><label for="l1"><u>Strahler Order</u></label></li>
        <li class="leg"><i class="br v"></i><i class="br"></i><i class="sw black"></i>1</li>
        <li class="leg"><i class="br v"></i><i class="br last"></i><i class="sw"></i>10</li>
        <li><i class="br ex open"></i><input type="checkbox" id="l2" checked><svg><use href="#raster"/></svg><label for="l2">Filled DEM</label></li>
        <li class="leg"><i class="br v"></i><i class="br"></i><i class="sw teal"></i>9</li>
        <li class="leg"><i class="br v"></i><i class="br"></i><i class="sw green"></i>142</li>
        <li class="leg"><i class="br v"></i><i class="br"></i><i class="sw yellow"></i>275</li>
        <li class="leg"><i class="br v"></i><i class="br"></i><i class="sw orange"></i>408</li>
        <li class="leg"><i class="br v"></i><i class="br"></i><i class="sw brown"></i>541</li>
        <li class="leg"><i class="br v"></i><i class="br last"></i><i class="sw dark"></i>674</li>
        <li><i class="br"></i><input type="checkbox" id="l3" checked><svg><use href="#raster"/></svg><label for="l3">Hillshade</label></li>
        <li><i class="br ex open last"></i><input type="checkbox" id="l4" checked><svg><use href="#raster"/></svg><label for="l4">OSM Standard</label></li>
      </ul>
    </section>
  </aside>
  <canvas class="map" id="map" width="202" height="168"></canvas>
  <aside class="toolbox">
    <header class="dockhead"><h2></h2><button aria-label="Float"><svg class="i8"><use href="#float"/></svg></button><button aria-label="Close"><svg class="i8"><use href="#x"/></svg></button></header>
    <div class="tbsearch"><input type="text" aria-label="Search toolbox"><button aria-label="Clear"><svg class="i8"><use href="#clear"/></svg></button></div>
    <div class="tblist"><div class="tbrow"></div></div>
  </aside>
</main>

<footer class="statusbar">
  <label class="locate"><svg class="i10"><use href="#search"/></svg><input type="text" placeholder="Type to locate (Ctrl+K)"></label>
  <output>2 legend entries removed.</output>
  <label for="coord">Coordinate</label><input class="field w-coord" id="coord" value="311093,5631516">
  <button aria-label="Toggle extents"><svg class="i10"><use href="#extent"/></svg></button>
  <label for="scale">Scale</label><select class="combo w-scale" id="scale"><option>1:23.449</option></select>
  <button aria-label="Lock scale"><svg class="i10"><use href="#lock"/></svg></button>
  <label for="mag">Magnifier</label><span class="spin w-mag"><input id="mag" value="100%"><i></i></span>
  <label for="rot" class="gapl">Rotation</label><span class="spin w-rot"><input id="rot" value="0,0 °"><i></i></span>
  <label class="check gapl"><input type="checkbox" checked>Render</label>
  <button class="crs"><svg class="i10"><use href="#crs"/></svg>EPSG:32632</button>
  <button aria-label="Messages" class="msg"><svg class="i10"><use href="#bubble"/></svg></button>
</footer>

<div class="dialog" role="dialog" aria-label="Layer Properties">
  <header class="dlgtitle"><svg class="i12"><use href="#qgis"/></svg><span class="dlgname">Layer Properties - Strahler Order | Symbology</span><button>?</button><button aria-label="Close"><svg class="i10"><use href="#x"/></svg></button></header>
  <div class="dlgbody">
    <nav class="side">
      <label class="sidesearch"><svg class="i10"><use href="#search"/></svg><input type="text" aria-label="Search"></label>
      <div class="sidelist">
        <button><svg><use href="#infobig"/></svg>Information</button>
        <button><svg><use href="#tools"/></svg>Source</button>
        <button class="active"><svg><use href="#symb"/></svg>Symbology</button>
        <button><svg><use href="#transp"/></svg>Transparency</button>
        <button><svg><use href="#hist"/></svg>Histogram</button>
        <button><svg><use href="#brush"/></svg>Rendering</button>
        <button><svg><use href="#pyr"/></svg>Pyramids</button>
        <button><svg><use href="#meta"/></svg>Metadata</button>
        <button><svg><use href="#leg"/></svg>Legend</button>
        <button><svg><use href="#server"/></svg>QGIS Server</button>
      </div>
    </nav>
    <div class="pane">
      <div class="scroller">
        <div class="content">
          <section class="group">
            <h3><i class="tri"></i>Band rendering</h3>
            <div class="box band">
              <div class="row r-type"><label for="rt">Render type</label><select class="combo hot" id="rt"><option>Singleband pseudocolor</option></select></div>
              <div class="grid">
                <label for="bd">Band</label><select class="combo" id="bd"><option>Band 1</option></select>
                <div class="minmax"><label for="mn">Min</label><input class="field" id="mn" value="1"><label for="mx">Max</label><input class="field" id="mx" value="10"></div>
                <h4><i class="tri right"></i>Min / max values settings</h4>
                <label for="ip">Interpolation</label><select class="combo" id="ip"><option>Linear</option></select>
                <span>Color ramp</span><div class="ramp"><button class="rampbar" aria-label="Color ramp"></button><button class="rampdrop" aria-label="Choose ramp"></button></div>
                <label for="lu" class="two">Label unit suffix</label><input class="field" id="lu">
              </div>
              <div class="classes">
                <table>
                  <thead><tr><th class="c1">Value</th><th class="c2">Color</th><th>Label</th></tr></thead>
                  <tbody>
                    <tr><td>1</td><td class="k1"></td><td>1</td></tr>
                    <tr><td>2.17</td><td class="k2"></td><td>2.17</td></tr>
                    <tr><td>3.34</td><td class="k3"></td><td>3.34</td></tr>
                    <tr><td>4.51</td><td class="k4"></td><td>4.51</td></tr>
                    <tr><td>5.68</td><td class="k5"></td><td>5.68</td></tr>
                    <tr><td>6.85</td><td class="k6"></td><td>6.85</td></tr>
                    <tr><td>8.02</td><td class="k7"></td><td>8.02</td></tr>
                    <tr><td>9.1</td><td class="k8"></td><td>9.1</td></tr>
                    <tr><td>10</td><td class="k9"></td><td>10</td></tr>
                  </tbody>
                </table>
              </div>
              <div class="row moderow"><label for="md">Mode</label><select class="combo w-mode" id="md"><option>Continuous</option></select><label for="cl" class="push">Classes</label><span class="spin off w-cl"><input id="cl" value="5" disabled><i></i></span></div>
              <div class="row actions"><button class="btn">Classify</button><button class="btn ic" aria-label="Add"><svg><use href="#addclass"/></svg></button><button class="btn ic" aria-label="Remove"><svg><use href="#delclass"/></svg></button><button class="btn ic" aria-label="Reload"><svg><use href="#refresh"/></svg></button><button class="btn ic" aria-label="Load"><svg><use href="#folder"/></svg></button><button class="btn ic" aria-label="Export"><svg><use href="#saveas"/></svg></button></div>
              <label class="check"><input type="checkbox">Clip out of range values</label>
            </div>
          </section>
          <section class="group">
            <h3><i class="tri"></i>Color rendering</h3>
            <div class="box color">
              <div class="row"><label class="lab" for="bm">Blending mode</label><select class="combo w-blend" id="bm"><option>Normal</option></select><button class="btn reset push"><svg class="i10"><use href="#undo"/></svg>Reset</button></div>
              <div class="pair">
                <div class="row"><label class="lab" for="br">Brightness</label><input type="range" id="br" min="-255" max="255" value="0"><span class="spin w-sp"><input aria-label="Brightness value" value="0"><i></i></span></div>
                <div class="row vline"><label class="lab2" for="ct">Contrast</label><input type="range" id="ct" min="-100" max="100" value="0"><span class="spin w-sp2"><input aria-label="Contrast value" value="0"><i></i></span></div>
                <div class="row"><label class="lab" for="sa">Saturation</label><input type="range" id="sa" min="-100" max="100" value="0"><span class="spin w-sp"><input aria-label="Saturation value" value="0"><i></i></span></div>
                <div class="row vline"><label class="lab2" for="gs">Grayscale</label><select class="combo grow" id="gs"><option>Off</option></select></div>
              </div>
              <div class="row hue"><span class="lab">Hue</span><label class="check"><input type="checkbox">Colorize</label><button class="btn swatch" aria-label="Colour"><i></i></button><button class="mini" aria-label="Colour menu"></button><label for="st">Strength</label><input type="range" id="st" value="100"><span class="spin off w-st"><input aria-label="Strength value" value="100%" disabled><i></i></span></div>
            </div>
          </section>
          <section class="group"><h3><i class="tri"></i>Resampling</h3><div class="box"></div></section>
        </div>
        <div class="sbar"><button class="up" aria-label="Scroll up"></button><div class="thumb"></div><button class="down" aria-label="Scroll down"></button></div>
      </div>
      <footer class="dlgfoot"><button class="btn style">Style</button><button class="btn default push">OK</button><button class="btn">Cancel</button><button class="btn">Apply</button><button class="btn">Help</button></footer>
    </div>
  </div>
  <svg class="cursor" viewBox="0 0 50 50"><circle cx="25" cy="25" r="23" fill="none" stroke="#f4f01c" stroke-width="2.500"/><path d="M24.500 24v11l2.600-2.300 2 4.300 1.700-.8-2-4.200h3.400z" fill="#fff" stroke="#555" stroke-width=".8"/></svg>
</div>
<script src="map.js"></script>
</body>
</html>
```

FILE: styles.css
```css
:root {
  --face: #efefef;
  --line: #c4c4c4;
  --dark: #7b7b7b;
  --arrow: url("data:image/svg+xml,%3Csvg xmlns='http://www.w3.org/2000/svg' width='10' height='10'%3E%3Cpath d='M0 0h10v10H0z' fill='%23efefef'/%3E%3Cpath d='M9.500 0v9.500H0' fill='none' stroke='%23777'/%3E%3Cpath d='M2.500 3.500h4.600L4.800 6.200z' fill='%23000'/%3E%3C/svg%3E");
  --tri: url("data:image/svg+xml,%3Csvg xmlns='http://www.w3.org/2000/svg' width='6' height='4'%3E%3Cpath d='M.5 0h5L3 3z' fill='%23222'/%3E%3C/svg%3E");
  --triup: url("data:image/svg+xml,%3Csvg xmlns='http://www.w3.org/2000/svg' width='6' height='4'%3E%3Cpath d='M.5 3h5L3 0z' fill='%23222'/%3E%3C/svg%3E");
  --spin: url("data:image/svg+xml,%3Csvg xmlns='http://www.w3.org/2000/svg' width='10' height='11'%3E%3Cpath d='M0 0h10v11H0z' fill='%23efefef'/%3E%3Cpath d='M0 5.500h10M9.500 0v11M0 10.500h10' stroke='%23888'/%3E%3Cpath d='M3 3.500h3L4.500 2zM3 7.500h3L4.500 9z' fill='%23222'/%3E%3C/svg%3E");
}
* { box-sizing: border-box; }
body {
  margin: 0;
  height: 100vh;
  overflow: hidden;
  display: flex;
  flex-direction: column;
  position: relative;
  background: var(--face);
  color: #444;
  font: 8px/12px "Noto Sans", "Open Sans", sans-serif;
}
button, input, select { font: inherit; color: inherit; margin: 0; padding: 0; border: 0; background: none; border-radius: 0; }
button { display: inline-flex; align-items: center; justify-content: center; }
h2, h3, h4 { margin: 0; font-size: 8px; }
ul { margin: 0; padding: 0; list-style: none; }
i { font-style: normal; flex: none; }
svg { flex: none; display: block; }
.defs { position: absolute; width: 0; height: 0; }
.i8 { width: 8px; height: 8px; }
.i10 { width: 10px; height: 10px; }
.i12 { width: 12px; height: 12px; }
.push { margin-left: auto; }

.titlebar { display: flex; align-items: center; height: 15px; background: #fff; padding-left: 1px; color: #888; }
.apptitle { padding-left: 3px; flex: 1; }
.wincontrols { display: flex; gap: 20px; padding-right: 12px; color: #777; }
.menubar { display: flex; gap: 7px; height: 13px; padding-left: 4px; color: #999; }

.toolbar { display: flex; height: 22px; border-top: 1px solid #bdbdbd; background: #f0f0f0; }
.strip { height: 11px; border-top: 1px solid #ccc; border-bottom: 1px solid #aaa; padding: 3px 2px; }
.grip { display: block; width: 4px; height: 3px; border: 1px solid #aaa; border-top: 0; }
.tools { display: flex; align-items: center; justify-content: space-between; border-right: 1px solid #c9c9c9; padding-left: 8px; background: linear-gradient(#c4c4c4, #c4c4c4) 2px 50% / 1px 16px no-repeat, linear-gradient(#c4c4c4, #c4c4c4) 5px 50% / 1px 16px no-repeat; }
.tools button { width: 18px; height: 20px; flex: none; }
.tools svg { width: 16px; height: 16px; }
.tools .drop { width: 27px; justify-content: flex-start; }
.drop::after { content: ""; width: 6px; height: 4px; margin-left: 3px; background: var(--tri); }
.gray { color: #a5a5a5; }
.gray.drop::after { opacity: .4; }
.off svg { opacity: .5; }
.pressed { background: #f8f8f8; outline: 1px solid #ddd; }
.blue { color: #5c93cb; }
.t-file { width: 135px; padding-right: 4px; }
.t-nav { width: 298px; padding-right: 3px; }
.t-attr { border: 0; width: 295px; }
.t-src { width: 114px; padding-right: 3px; }
.t-edit { width: 257px; padding-right: 3px; }
.t-label { width: 174px; padding-left: 26px; justify-content: flex-start; gap: 6px; }
.t-web { width: 72px; padding-right: 3px; }

.workspace { flex: 1; min-height: 0; display: grid; grid-template-columns: 228px minmax(0, 26fr) minmax(0, 11fr); }
.docks { display: flex; flex-direction: column; min-height: 0; border-right: 1px solid #aaa; padding-right: 4px; }
.dock { display: flex; flex-direction: column; min-height: 0; }
.browser { flex: 339 1 0; }
.layers { flex: 275 1 0; margin-top: 5px; }
.dockhead { display: flex; align-items: center; gap: 3px; height: 14px; padding-left: 1px; flex: none; }
.dockhead h2 { flex: 1; font-weight: normal; }
.docktools { display: flex; align-items: center; gap: 4px; height: 17px; flex: none; padding: 0 3px; }
.docktools svg { width: 11px; height: 11px; }
.tree { flex: 1; min-height: 0; background: #fff; border-top: 1px solid #777; border-left: 1px solid #999; color: #444; overflow: hidden; }
.tree li { display: flex; align-items: center; height: 12px; white-space: nowrap; }
.tree li > svg { width: 11px; height: 11px; margin-right: 4px; }
.br { position: relative; width: 15px; height: 12px; background: linear-gradient(#ccc, #ccc) 7px 0 / 1px 100% no-repeat, linear-gradient(#ccc, #ccc) 7px 6px / 6px 1px no-repeat; }
.br.last { background-size: 1px 6px, 6px 1px; }
.br.v { background: linear-gradient(#ccc, #ccc) 7px 0 / 1px 100% no-repeat; width: 13px; }
.ex::after { content: ""; position: absolute; left: 4px; top: 3px; width: 7px; height: 7px; border: 1px solid #bbb; background: linear-gradient(#666, #666) 1px 2px / 3px 1px no-repeat, linear-gradient(#666, #666) 2px 1px / 1px 3px no-repeat, #fff; }
.ex.open::after { background: linear-gradient(#666, #666) 1px 2px / 3px 1px no-repeat, #fff; }
.layertree label { font-weight: bold; color: #222; }
.layertree .current { background: #efefef; }
.layertree li > svg { margin: 0 4px 0 4px; }
.sw { width: 11px; height: 12px; margin: 0 3px 0 1px; }
.black { background: #000; }
.teal { background: #0bbfc0; }
.green { background: #0f0; }
.yellow { background: #ff0; }
.orange { background: #ff8000; }
.brown { background: #c47f41; }
.dark { background: #171717; }
input[type="checkbox"] { appearance: none; flex: none; width: 9px; height: 9px; border: 1px solid #888; background: #fff; }
input[type="checkbox"]:checked { background: #fff url("data:image/svg+xml,%3Csvg xmlns='http://www.w3.org/2000/svg' width='7' height='7'%3E%3Cpath d='M1 3l2 2 3-4' fill='none' stroke='%23000' stroke-width='1.200'/%3E%3C/svg%3E"); }

.map { width: 100%; height: 100%; min-height: 0; background: #000; image-rendering: pixelated; display: block; }
.toolbox { display: flex; flex-direction: column; margin-left: 5px; border-left: 1px solid #aaa; padding-right: 1px; }
.toolbox .dockhead { height: 31px; align-items: flex-start; padding: 1px 2px 0 0; }
.tbsearch { display: flex; height: 13px; background: #fff; border-top: 1px solid #888; padding-right: 5px; }
.tbsearch input { flex: 1; min-width: 0; }
.tblist { flex: 1; background: #fff; border-top: 1px solid #888; padding-top: 139px; }
.tbrow { height: 12px; background: #efefef; }

.statusbar { display: flex; align-items: center; gap: 3px; height: 19px; padding: 2px 4px 0 3px; border-bottom: 2px solid #2a5a35; flex: none; }
.locate { display: flex; align-items: center; gap: 7px; width: 132px; height: 13px; padding-left: 5px; background: #fff; border: 1px solid #888; border-width: 1px 0 0 1px; margin-right: 3px; }
.locate input { flex: 1; min-width: 0; }
.locate input::placeholder { color: #888; }
.statusbar output { flex: 1; }
.statusbar button { padding: 0 3px; gap: 3px; }
.statusbar .gapl { margin-left: 3px; }

.field, .combo, .spin { height: 13px; background: #fff; border: 1px solid #eee; border-top-color: var(--dark); border-left-color: var(--dark); padding-left: 1px; min-width: 0; }
.combo { appearance: none; border-color: var(--dark) #999 #ddd var(--dark); background: #fff var(--arrow) right 0 top 50% no-repeat; padding-right: 12px; }
.spin { display: inline-flex; border-color: var(--dark); border-bottom-color: #ddd; padding-right: 0; }
.spin input { flex: 1; min-width: 0; width: 0; }
.spin i { width: 10px; background: var(--spin) 0 50%; }
.spin.off { background: #efefef; color: #999; }
.w-coord { width: 73px; text-align: center; }
.w-scale { width: 65px; }
.w-mag { width: 57px; }
.w-rot { width: 58px; }
.w-mode { width: 70px; }
.w-cl { width: 30px; }
.w-blend { width: 273px; }
.w-sp { width: 34px; }
.w-sp2 { width: 43px; }
.w-st { width: 39px; }
.grow { flex: 1; }
.check { display: inline-flex; align-items: center; gap: 4px; }
.dialog input[type="checkbox"] { width: 8px; height: 8px; border-color: #888 #f8f8f8 #f8f8f8 #888; }

.dialog { position: absolute; left: 380px; top: 57px; width: 806px; height: 539px; display: flex; flex-direction: column; background: var(--face); border: solid #3a8a3f; border-width: 0 1px 1px 0; box-shadow: 1px 1px 8px rgba(60, 60, 90, .45); }
.dlgtitle { display: flex; align-items: center; height: 20px; background: #107c10; color: #fff; padding: 0 10px 0 5px; flex: none; }
.dlgname { flex: 1; padding-left: 3px; }
.dlgtitle button { width: 12px; margin-left: 18px; color: #dfe; }
.dlgbody { flex: 1; min-height: 0; display: flex; }
.side { width: 111px; flex: none; background: #5c5c5c; color: #fff; }
.sidesearch { display: flex; align-items: center; height: 13px; border-top: 1px solid #ccc; background: #fff; padding-left: 5px; }
.sidesearch input { flex: 1; min-width: 0; color: #333; }
.sidelist { display: flex; flex-direction: column; padding-top: 5px; }
.sidelist button { height: 24px; justify-content: flex-start; gap: 5px; padding-left: 3px; }
.sidelist svg { width: 16px; height: 16px; }
.sidelist .active { background: #f0f0f0; color: #444; gap: 7px; }
.pane { flex: 1; min-width: 0; display: flex; flex-direction: column; }
.scroller { flex: 1; min-height: 0; display: flex; overflow: hidden; }
.content { flex: 1; min-width: 0; padding: 8px 6px 0 9px; overflow: hidden; }
.group { margin-bottom: 4px; }
.group h3, .grid h4 { display: flex; align-items: center; height: 12px; color: #444; }
h3::after, h4::after { content: ""; flex: 1; border-top: 1px solid var(--line); margin-left: 4px; }
.tri { width: 7px; height: 5px; background: #333; clip-path: polygon(0 0, 100% 0, 50% 100%); margin: 0 6px 0 2px; }
.tri.right { width: 5px; height: 7px; clip-path: polygon(0 0, 100% 50%, 0 100%); margin: 0 6px 0 3px; }
.box { border: 1px solid var(--line); border-top: 0; }
.band { padding: 6px 8px 7px 6px; }
.row { display: flex; align-items: center; min-width: 0; }
.r-type { gap: 5px; height: 12px; }
.hot { background-color: #0a6fc8; color: #fff; width: 105px; }
.grid { display: grid; grid-template-columns: 48px 1fr; grid-template-rows: 18px 17px 16px 20px 18px 22px; column-gap: 3px; align-items: center; padding-left: 2px; margin-top: 4px; }
.grid > .combo, .grid > .field { width: 100%; }
.minmax { grid-column: 2; display: grid; grid-template-columns: 1fr 1fr 1fr 1fr; column-gap: 3px; }
.grid h4 { grid-column: 1 / -1; }
.ramp { display: flex; height: 14px; margin-right: -2px; }
.rampbar { flex: 1; background: linear-gradient(90deg, #f7fbff, #deebf7 13%, #c6dbef 26%, #9ecae1 39%, #6baed6 52%, #4292c6 65%, #2171b5 78%, #08519c 90%, #08306b); border: 1px solid #efefef; border-bottom: 2px solid #999; }
.rampdrop { width: 10px; border-right: 1px solid #999; border-left: 1px solid #999; background: var(--tri) 1px 50% no-repeat; }
.two { line-height: 9px; }
.classes { height: 165px; background: #fff; border: 1px solid var(--dark); border-width: 1px 0 0 1px; margin: 4px 1px 0 3px; }
table { width: 100%; height: 98px; border-collapse: collapse; line-height: 9px; }
thead tr { height: 14px; }
th { text-align: left; font-weight: normal; background: var(--face); border-right: 1px solid var(--dark); border-bottom: 1px solid var(--dark); padding: 0 3px; }
.c1 { width: 66px; }
.c2 { width: 33px; }
td { padding: 0 2px; }
td:first-child { padding-left: 16px; background: linear-gradient(#ccc, #ccc) 7px 0 / 1px 100% no-repeat, linear-gradient(#ccc, #ccc) 7px 50% / 5px 1px no-repeat; }
td:last-child { color: #aaa; }
.k1 { background: #f7fbff; }
.k2 { background: #deebf7; }
.k3 { background: #c6dbef; }
.k4 { background: #9ecae1; }
.k5 { background: #6baed6; }
.k6 { background: #4292c6; }
.k7 { background: #2171b5; }
.k8 { background: #08519c; }
.k9 { background: #08306b; }
.moderow { gap: 4px; margin-top: 5px; padding: 0 1px 0 2px; }
.actions { gap: 5px; margin: 4px 0 6px 3px; }
.band > .check { margin-left: 3px; height: 12px; }
.btn { height: 17px; min-width: 51px; background: #f0f0f0; border: 1px solid #fafafa; border-right-color: #8a8a8a; border-bottom-color: #8a8a8a; }
.btn.ic { min-width: 20px; width: 20px; }
.ic svg { width: 11px; height: 11px; }
.color { padding: 3px 4px 4px 6px; }
.color > .row, .pair .row { height: 18px; }
.lab { width: 58px; flex: none; }
.lab2 { width: 37px; flex: none; }
.reset { height: 15px; min-width: 45px; gap: 3px; }
.reset svg { color: #e2703c; }
.pair { display: grid; grid-template-columns: 326px 1fr; column-gap: 4px; }
.pair .row { gap: 3px; }
.pair .lab { width: 55px; }
.pair .lab2 { width: 34px; }
.vline { border-left: 1px solid var(--line); padding-left: 5px; margin: 0 2px 0 0; }
input[type="range"] { appearance: none; flex: 1; min-width: 0; height: 12px; background: linear-gradient(#888, #888) 0 50% / 100% 1px no-repeat; }
input[type="range"]::-webkit-slider-thumb { appearance: none; width: 7px; height: 11px; background: #f0f0f0; border: 1px solid #fff; border-right-color: #777; border-bottom-color: #777; }
.hue { gap: 4px; padding-right: 2px; }
.hue .lab { width: 54px; }
.btn.swatch { width: 58px; height: 15px; padding: 0 2px; margin-left: 2px; }
.swatch i { width: 52px; height: 11px; background: #c6c6c6; }
.mini { width: 8px; height: 14px; margin-left: -4px; border-right: 1px solid #ccc; background: var(--tri) 1px 50% no-repeat; opacity: .6; }
.sbar { width: 13px; margin: 0 1px 0 0; padding-top: 1px; display: flex; flex-direction: column; background: #f8f8f8; }
.up, .down { height: 13px; border: 1px solid #fff; border-right-color: #888; border-bottom-color: #888; background: var(--face) var(--triup) 50% 50% no-repeat; }
.down { background-image: var(--tri); margin-top: auto; }
.thumb { height: 73%; background: var(--face); border-right: 1px solid #888; border-bottom: 1px solid #888; }
.dlgfoot { display: flex; align-items: center; gap: 4px; height: 23px; padding: 1px 2px 0 0; flex: none; }
.dlgfoot .style { min-width: 53px; gap: 12px; padding-left: 9px; }
.style::after { content: ""; width: 6px; height: 4px; background: var(--tri); }
.default { border-color: #777; }
.cursor { position: absolute; left: 177px; top: 69px; width: 50px; height: 50px; pointer-events: none; }
```

FILE: map.js
```js
// Draws a stream network shaded by Strahler order.
(function () {
const canvas = document.getElementById('map');
const ctx = canvas.getContext('2d');
const W = canvas.width, H = canvas.height, CELL = 739 / W;

let seed = 20417;
const rnd = () => (seed = (seed * 1103515245 + 12345) % 2147483648) / 2147483648;

// [grey level, x, y, x, y, ...]
const rivers = [
  [75, 120, 445, 130, 465, 150, 480, 170, 510],
  [75, 62, 463, 60, 485, 63, 495, 50, 510, 48, 530],
  [85, 0, 350, 34, 354, 32, 385, 8, 405, 6, 440, 12, 455],
  [95, 85, 378, 68, 395, 78, 410, 80, 430, 82, 448, 62, 463, 40, 467, 25, 465, 17, 485, 0, 497],
  [80, 68, 395, 50, 402],
  [90, 117, 412, 190, 412], [90, 117, 437, 150, 442, 190, 446],
  [85, 12, 263, 30, 262, 72, 262, 85, 280, 92, 290, 100, 295, 110, 292, 125, 305],
  [85, 85, 180, 64, 200, 85, 220, 95, 255, 100, 262, 110, 264, 128, 285],
  [100, 117, 140, 115, 150, 107, 164, 92, 165, 86, 175, 85, 180, 98, 192, 102, 225, 120, 235, 120, 243],
  [70, 110, 165, 116, 185, 117, 210],
  [150, 0, 154, 26, 154, 30, 151, 40, 158, 52, 154],
  [90, 0, 78, 10, 82, 22, 82, 35, 95, 43, 110, 45, 130, 52, 145],
  [80, 80, 72, 78, 85, 60, 95, 45, 100],
  [110, 48, 58, 60, 68, 80, 68, 82, 71, 110, 72, 117, 63, 140, 63, 150, 76],
  [85, 88, 15, 100, 25, 112, 32, 142, 29, 145, 45],
  [110, 120, 0, 130, 10, 150, 18],
  [120, 0, 26, 26, 25, 36, 18, 40, 0],
  [60, 0, 44, 26, 42, 28, 28],
  [70, 213, 550, 233, 574, 245, 577],
  [110, 196, 570, 200, 597, 213, 615],
  [80, 200, 580, 222, 587, 235, 594],
  [110, 703, 552, 700, 587, 674, 604, 664, 617],
  [115, 727, 514, 717, 534, 703, 552, 679, 574, 654, 574],
  [100, 574, 514, 557, 539, 548, 544, 538, 564, 509, 560, 477, 562, 451, 569, 434, 580, 417, 581],
  [120, 584, 573, 565, 573, 555, 594, 533, 615],
  [60, 460, 596, 490, 594, 520, 587],
  [75, 363, 514, 380, 528, 395, 534, 410, 560, 421, 563],
  [105, 308, 580, 339, 579, 356, 597],
  [100, 322, 579, 343, 565, 368, 579, 385, 593, 412, 593],
  [60, 350, 507, 352, 535, 365, 550],
  [130, 109, 507, 92, 510, 90, 522, 73, 539, 68, 541, 39, 541, 34, 547, 15, 552, 14, 584, 17, 617],
  [100, 113, 507, 117, 528, 135, 550],
  [80, 68, 541, 72, 560, 88, 580, 86, 600],
  [195, 688, 514, 667, 517, 652, 531, 618, 531, 614, 528, 606, 544, 587, 570, 588, 617],
  [170, 233, 514, 247, 524, 267, 532, 279, 540, 284, 557, 298, 569, 308, 579, 303, 602, 288, 617],
  [200, 215, 507, 214, 523, 206, 527, 205, 560, 196, 570, 179, 587, 166, 602, 165, 617],
  [155, 0, 250, 12, 263, 28, 264, 36, 276, 34, 292, 45, 303, 57, 318, 60, 333, 72, 348, 84, 368, 100, 385, 113, 396, 118, 410, 117, 445, 110, 455, 112, 480, 111, 512],
  [255, 160, 125, 130, 125, 119, 137, 90, 137, 85, 145, 82, 141, 70, 141, 65, 150, 54, 151, 53, 165, 56, 172, 48, 184, 40, 197, 25, 214, 12, 230, 9, 240, 0, 250]
];

const main = new Uint8Array(W * H);
for (const [grey, ...p] of rivers) {
  for (let k = 0; k + 3 < p.length; k += 2) {
    const x0 = p[k] / CELL, y0 = p[k + 1] / CELL, x1 = p[k + 2] / CELL, y1 = p[k + 3] / CELL;
    const n = Math.max(1, Math.ceil(Math.max(Math.abs(x1 - x0), Math.abs(y1 - y0))));
    for (let s = 0; s <= n; s++) {
      const x = Math.floor(x0 + (x1 - x0) * s / n), y = Math.floor(y0 + (y1 - y0) * s / n);
      if (x >= 0 && x < W && y >= 0 && y < H) main[y * W + x] = grey;
    }
  }
}

// Grow drainage paths outwards from the main rivers.
const cost = Float64Array.from({ length: W * H }, () => 6 + Math.floor(rnd() * rnd() * 60));
const dist = new Float64Array(W * H).fill(Infinity);
const parent = new Int32Array(W * H).fill(-1);
const done = new Uint8Array(W * H);
const buckets = [[]];
main.forEach((g, i) => { if (g) { dist[i] = 0; buckets[0].push(i); } });
const order = [];
for (let d = 0; d < buckets.length; d++) {
  for (const i of buckets[d] || []) {
    if (done[i]) continue;
    done[i] = 1;
    order.push(i);
    const x = i % W, y = (i - x) / W;
    for (let dy = -1; dy <= 1; dy++) for (let dx = -1; dx <= 1; dx++) {
      const nx = x + dx, ny = y + dy;
      if ((!dx && !dy) || nx < 0 || ny < 0 || nx >= W || ny >= H) continue;
      const j = ny * W + nx, nd = d + Math.ceil(cost[j] * (dx && dy ? 1.4 : 1));
      if (nd < dist[j]) { dist[j] = nd; parent[j] = i; (buckets[nd] = buckets[nd] || []).push(j); }
    }
  }
}

// Strahler order, from the headwaters down.
const rank = new Uint8Array(W * H).fill(1), best = new Uint8Array(W * H), ties = new Uint8Array(W * H);
const area = new Uint32Array(W * H).fill(1);
for (let k = order.length - 1; k >= 0; k--) {
  const i = order[k];
  if (best[i]) rank[i] = ties[i] > 1 ? best[i] + 1 : best[i];
  const p = parent[i];
  if (p < 0) continue;
  area[p] += area[i];
  if (rank[i] > best[p]) { best[p] = rank[i]; ties[p] = 1; } else if (rank[i] === best[p]) ties[p]++;
}

const shade = i => {
  if (rank[i] > 3) return 84;
  if (rank[i] === 3) return area[i] > 28 ? 70 : 52;
  if (rank[i] === 2) return area[i] > 7 ? 38 : 24;
  return area[i] > 3 ? 24 : 0;
};
const img = ctx.createImageData(W, H);
for (let i = 0; i < W * H; i++) {
  const g = main[i] || shade(i);
  img.data.set([g, g, g, 255], i * 4);
}
ctx.putImageData(img, 0, 0);
})();
```
